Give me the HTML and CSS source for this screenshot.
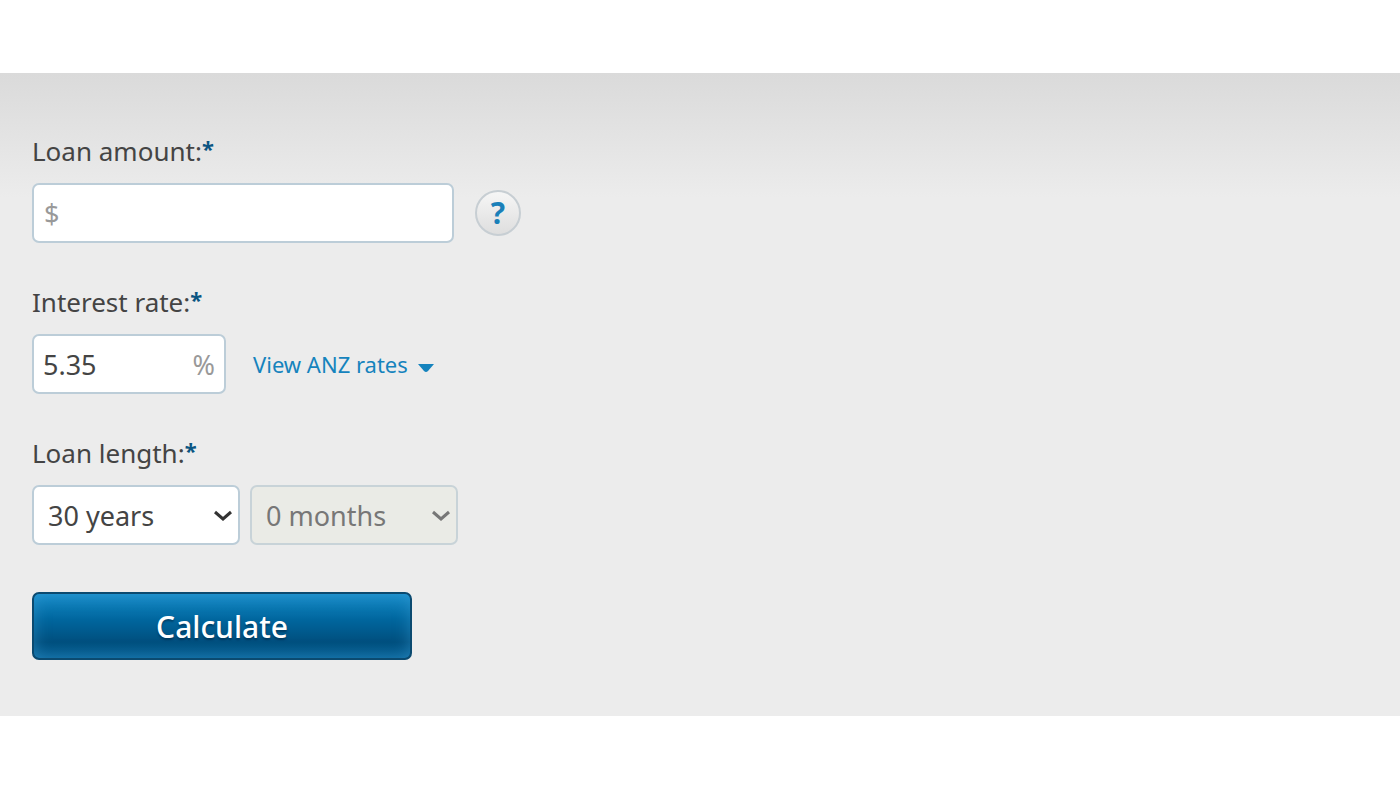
FILE: index.html
```html
<!DOCTYPE html>
<html lang="en">
<head>
  <meta charset="UTF-8">
  <meta name="viewport" content="width=device-width, initial-scale=1.0">
  <title>Loan Repayment Calculator</title>
  <link rel="stylesheet" href="styles.css">
</head>
<body>
  <form class="calculator">
    <div class="field">
      <label for="amount">Loan amount:<span class="required">*</span></label>
      <div class="row">
        <input type="text" id="amount" class="box amount" placeholder="$">
        <button type="button" class="help" aria-label="Help">?</button>
      </div>
    </div>
    <div class="field">
      <label for="rate">Interest rate:<span class="required">*</span></label>
      <div class="row">
        <div class="box rate">
          <input type="text" id="rate" value="5.35">
          <span class="unit">%</span>
        </div>
        <a href="#" class="rates-link">View ANZ rates
          <svg width="16" height="8" viewBox="0 0 16 8"><path d="M0 0H16L10 7Q8 9 6 7Z" fill="#1583bd"/></svg>
        </a>
      </div>
    </div>
    <div class="field">
      <label for="years">Loan length:<span class="required">*</span></label>
      <div class="row length">
        <div class="select">
          <select id="years" class="box">
            <option>30 years</option>
          </select>
          <svg class="arrow" width="18" height="12" viewBox="0 0 18 12"><path d="M1 2L9 9L17 2" fill="none" stroke="#333" stroke-width="3"/></svg>
        </div>
        <div class="select">
          <select id="months" class="box" aria-label="Months" disabled>
            <option>0 months</option>
          </select>
          <svg class="arrow" width="18" height="12" viewBox="0 0 18 12"><path d="M1 2L9 9L17 2" fill="none" stroke="#777" stroke-width="3"/></svg>
        </div>
      </div>
    </div>
    <button type="submit" class="calculate">Calculate</button>
  </form>
</body>
</html>
```
FILE: styles.css
```css
body {
  margin: 0;
  padding: 73px 0;
  background-color: #fff;
  color: #444;
  font-family: "Noto Sans", "Open Sans", sans-serif;
  font-size: 27px;
}

.calculator {
  padding: 60px 32px 56px;
  background: #ececec linear-gradient(#dadada, #ececec) no-repeat;
  background-size: 100% 125px;
}

.field {
  margin-bottom: 41px;
}

label {
  display: block;
  margin-bottom: 14px;
  font-size: 26px;
  line-height: 36px;
}

.required {
  color: #0a5582;
  font-size: 22px;
  font-weight: bold;
  line-height: 1;
  vertical-align: 4px;
}

.row {
  display: flex;
  align-items: center;
}

.box {
  box-sizing: border-box;
  height: 60px;
  padding: 0 10px;
  border: 2px solid #bccdd8;
  border-radius: 7px;
  background-color: #fff;
  color: #444;
  font: inherit;
}

.amount {
  width: 422px;
}

.amount::placeholder {
  color: #999;
  opacity: 1;
}

.help {
  width: 46px;
  height: 46px;
  margin-left: 21px;
  padding: 0;
  border: 2px solid #c7ced3;
  border-radius: 50%;
  background: linear-gradient(#f6f6f6, #dedede);
  color: #1a80b9;
  font: bold 30px/40px "Noto Sans", sans-serif;
  cursor: pointer;
}

.rate {
  display: flex;
  align-items: center;
  width: 194px;
  padding: 0 9px;
}

.rate input {
  flex: 1;
  min-width: 0;
  padding: 0;
  border: none;
  outline: none;
  background: none;
  color: inherit;
  font: inherit;
}

.unit {
  color: #999;
}

.rates-link {
  display: flex;
  align-items: center;
  gap: 10px;
  margin-left: 27px;
  color: #1583bd;
  font-size: 22px;
  text-decoration: none;
}

.rates-link svg {
  margin-top: 8px;
}

.length {
  gap: 10px;
}

.select {
  position: relative;
}

.select select {
  display: block;
  width: 208px;
  padding: 0 14px;
  appearance: none;
}

.select select:disabled {
  border-color: #c8d3d8;
  background-color: #eaebe6;
  color: #777;
  opacity: 1;
}

.arrow {
  position: absolute;
  top: 25px;
  right: 8px;
  pointer-events: none;
}

.calculate {
  display: block;
  width: 380px;
  height: 68px;
  margin-top: 47px;
  border: 2px solid #0b4a70;
  border-radius: 7px;
  background: linear-gradient(#168bc8, #00669e 40%, #004f7e 75%, #075f93);
  box-shadow: inset 0 0 16px rgba(60, 160, 215, 0.5);
  color: #fff;
  font: 500 30px "Noto Sans", sans-serif;
  text-shadow: 0 2px 2px rgba(0, 40, 70, 0.6);
  cursor: pointer;
}
```
